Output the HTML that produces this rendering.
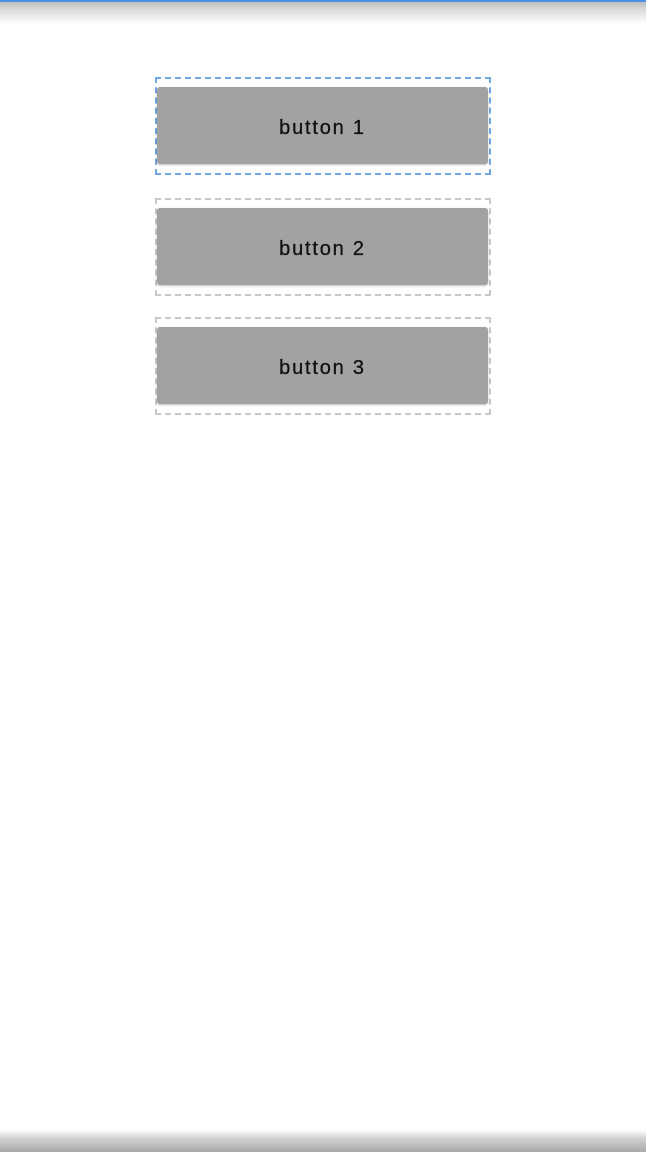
<!DOCTYPE html>
<html><head><style>
body{margin:0;width:646px;height:1152px;background:#fff;position:relative;overflow:hidden;font-family:"Liberation Sans",sans-serif}
.top{position:absolute;left:0;top:0;width:646px;height:24px;background:linear-gradient(#b8b8b8,#dedede 45%,#fff)}
.top:before{content:"";position:absolute;left:0;top:0;width:100%;height:2px;background:#4a90e2}
.bot{position:absolute;left:0;top:1130px;width:646px;height:22px;background:linear-gradient(#fff,#d0d0d0 40%,#a8a8a8)}
.box{position:absolute;left:155px;top:0;width:332px;height:94px;border:2px dashed #c8c8c8}
.box.sel{border-color:#6fa6e4}
.btn{position:absolute;left:0;top:8px;width:331px;height:77px;background:#a2a2a2;border-radius:3px;box-shadow:0 1px 2px rgba(0,0,0,.25);text-align:center;line-height:82px;font-size:20px;letter-spacing:1.8px;color:#111;-webkit-text-stroke:0.3px #111}
</style></head><body>
<div class="top"></div>
<div class="box sel" style="top:77px"><div class="btn">button 1</div></div>
<div class="box" style="top:198px"><div class="btn">button 2</div></div>
<div class="box" style="top:317px"><div class="btn">button 3</div></div>
<div class="bot"></div>
</body></html>
